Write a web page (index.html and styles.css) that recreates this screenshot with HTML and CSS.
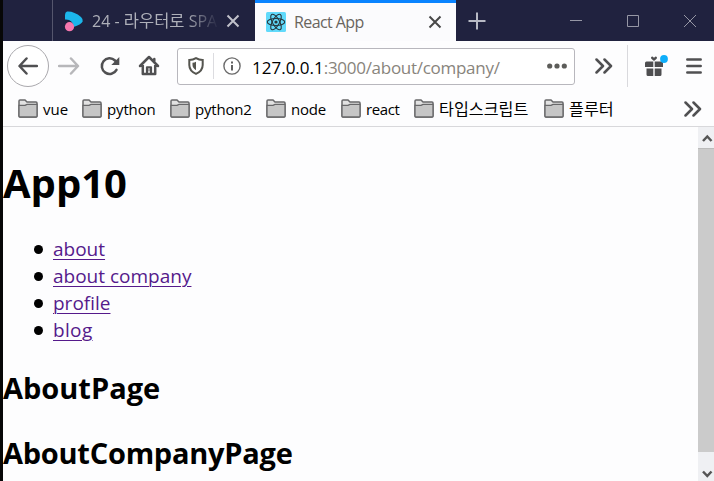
FILE: index.html
```html
<!DOCTYPE html>
<html lang="ko">
<head>
<meta charset="utf-8">
<title>React App</title>
<link rel="stylesheet" href="styles.css">
</head>
<body>
<div class="browser">
  <header class="tabs">
    <div class="tab">
      <svg class="favicon" width="20" height="21" viewBox="0 0 20 21"><path d="M3 0.5Q1 1 1 4V8.5Q9 8 9.5 16Q17 13.5 18.7 10.5Q19.5 8.5 17 6Q10 0 3 0.5Z" fill="#1cb6ea"/><circle cx="5.5" cy="15.7" r="4.6" fill="#f777ae"/></svg>
      <span class="tab-title faded">24 - <span class="tab-korean">라우터로</span> SPA</span>
      <svg class="tab-close" width="14" height="14" viewBox="0 0 14 14"><path d="M1.5 1.5L12.5 12.5M12.5 1.5L1.5 12.5"/></svg>
    </div>
    <div class="tab active">
      <svg class="favicon" width="20" height="20" viewBox="0 0 20 20"><rect width="20" height="20" rx="1.5" fill="#61dafb"/><g fill="none" stroke="#27363c" stroke-width="1.1"><ellipse cx="10" cy="10" rx="8.7" ry="3.5"/><ellipse cx="10" cy="10" rx="8.7" ry="3.5" transform="rotate(60 10 10)"/><ellipse cx="10" cy="10" rx="8.7" ry="3.5" transform="rotate(120 10 10)"/></g><circle cx="10" cy="10" r="1.6" fill="#27363c"/></svg>
      <span class="tab-title react">React App</span>
      <svg class="tab-close" width="14" height="14" viewBox="0 0 14 14"><path d="M1.5 1.5L12.5 12.5M12.5 1.5L1.5 12.5"/></svg>
    </div>
    <svg class="new-tab" width="18" height="18" viewBox="0 0 18 18"><path d="M9 0.5V17.5M0.5 9H17.5"/></svg>
    <div class="window-controls">
      <svg width="14" height="14" viewBox="0 0 14 14"><path d="M1 6.5H13"/></svg>
      <svg width="14" height="14" viewBox="0 0 14 14"><path d="M1.5 1.5H12.5V12.5H1.5Z"/></svg>
      <svg width="14" height="14" viewBox="0 0 14 14"><path d="M1 1L13 13M13 1L1 13"/></svg>
    </div>
  </header>
  <nav class="toolbar">
    <div class="back"><svg class="icon" width="20" height="20" viewBox="0 0 20 20"><path d="M19 10H2M8.5 2.5L1.5 10L8.5 17.5"/></svg></div>
    <svg class="icon forward" width="22" height="20" viewBox="0 0 22 20"><path d="M1 10H19M13 2.5L20 10L13 17.5"/></svg>
    <svg class="icon reload" width="20" height="20" viewBox="0 0 20 20"><path d="M16.5 13.8A7.8 7.8 0 1 1 15 4.5L17 6.5"/><path d="M19.3 1V9H11.3Z" class="solid"/></svg>
    <svg class="icon home" width="22" height="21" viewBox="0 0 22 21"><path d="M2 11L11 2L20 11M4.8 10V19H17.2V10M16.3 4V7"/><path d="M9 18.5V12.3H13V18.5" stroke-width="2.2"/><path d="M11 14.5V16" stroke-width="1"/></svg>
    <div class="address">
      <svg class="shield" width="16" height="18" viewBox="0 0 16 18"><path d="M8 1.2Q11 3 14.7 3V8Q14.7 14 8 16.8Q1.3 14 1.3 8V3Q5 3 8 1.2Z" fill="none" stroke="#55554f" stroke-width="2"/><path d="M8 4.7V13.2Q4.5 11 4.5 8V5.7Q6.5 5.5 8 4.7Z" fill="#55554f"/></svg>
      <span class="address-divider"></span>
      <svg class="info" width="18" height="18" viewBox="0 0 18 18"><circle cx="9" cy="9" r="8.1" fill="none" stroke="#6b6b6b" stroke-width="1.4"/><path d="M9 8V13.5M9 4.5V6.5" stroke="#606060" stroke-width="2"/></svg>
      <span class="url"><b>127.0.0.1</b>:3000/about/company/</span>
      <svg class="dots" width="20" height="6" viewBox="0 0 20 6"><circle cx="2.7" cy="3" r="2.6"/><circle cx="10" cy="3" r="2.6"/><circle cx="17.3" cy="3" r="2.6"/></svg>
    </div>
    <svg class="icon more" width="18" height="16" viewBox="0 0 18 16"><path d="M1.5 1.5L8 8L1.5 14.5M9.5 1.5L16 8L9.5 14.5"/></svg>
    <span class="tool-divider"></span>
    <svg class="gift" width="24" height="22" viewBox="0 0 24 22"><g fill="#4e4e50"><path d="M0 8Q0 6.5 1.5 6.5H8.3V12H0ZM9.7 6.5H16.5Q18 6.5 18 8V12H9.7ZM1.5 13.5H8.3V21H3Q1.5 21 1.5 19.5ZM9.7 13.5H16.5V19.5Q16.5 21 15 21H9.7Z"/><path d="M9 6L6.3 3.8Q5.5 1.5 7.5 1.5L9 2.8L10.5 1.5Q12.5 1.5 11.7 3.8Z"/></g><circle cx="19" cy="4" r="3.9" fill="#0eaefa"/></svg>
    <svg class="icon menu" width="16" height="16" viewBox="0 0 16 16"><path d="M1.3 1.5H14.7M1.3 8H14.7M1.3 14.5H14.7"/></svg>
  </nav>
  <div class="bookmarks">
    <svg class="symbols" width="0" height="0"><defs><g id="folder"><path d="M1 17V2Q1 1 2 1H7L9 3H18Q19 3 19 4V17Q19 18 18 18H2Q1 18 1 17Z" fill="#e2e2e2" stroke="#68686a" stroke-width="1.5"/><path d="M1 6.3H7L9 5.3H19V17Q19 18 18 18H2Q1 18 1 17Z" fill="#c6c6c6" stroke="#68686a" stroke-width="1.3"/></g></defs></svg>
    <div class="bookmark vue"><svg width="20" height="19"><use href="#folder"/></svg><span>vue</span></div>
    <div class="bookmark python"><svg width="20" height="19"><use href="#folder"/></svg><span>python</span></div>
    <div class="bookmark python2"><svg width="20" height="19"><use href="#folder"/></svg><span>python2</span></div>
    <div class="bookmark node"><svg width="20" height="19"><use href="#folder"/></svg><span>node</span></div>
    <div class="bookmark react-link"><svg width="20" height="19"><use href="#folder"/></svg><span>react</span></div>
    <div class="bookmark typescript"><svg width="20" height="19"><use href="#folder"/></svg><span>타입스크립트</span></div>
    <div class="bookmark flutter"><svg width="20" height="19"><use href="#folder"/></svg><span>플루터</span></div>
    <svg class="icon bookmarks-more" width="18" height="16" viewBox="0 0 18 16"><path d="M1.5 1.5L8 8L1.5 14.5M9.5 1.5L16 8L9.5 14.5"/></svg>
  </div>
  <div class="viewport">
    <main>
      <h1>App10</h1>
      <ul>
        <li><a class="l-about" href="#">about</a></li>
        <li><a class="l-company" href="#">about company</a></li>
        <li><a class="l-profile" href="#">profile</a></li>
        <li><a class="l-blog" href="#">blog</a></li>
      </ul>
      <h2>AboutPage</h2>
      <h2 class="company">AboutCompanyPage</h2>
    </main>
    <div class="scrollbar">
      <svg width="16" height="21" viewBox="0 0 16 21"><path d="M5 14L9.3 9.5L13.5 14"/></svg>
      <div class="thumb"></div>
      <svg width="16" height="29" viewBox="0 0 16 29"><path d="M5 19.5L9.3 24L13.5 19.5"/></svg>
    </div>
  </div>
</div>
</body>
</html>
```
FILE: styles.css
```css
* { box-sizing: border-box; }
body { margin: 0; font-family: "Open Sans", "Noto Sans CJK KR", sans-serif; color: #000; overflow: hidden; }
svg { display: block; flex: none; }
.browser { width: 714px; height: 481px; display: flex; flex-direction: column; border-left: 3px solid #070707; background: #fdfdfe; }
.tabs { height: 41px; flex: none; display: flex; align-items: center; background: #20223f; }
.tab { height: 41px; width: 203px; margin-left: 49px; border-left: 1px solid #55566d; padding: 1px 0 0 11px; display: flex; align-items: center; white-space: nowrap; }
.tab.active { width: 201px; margin-left: 0; border-left: 0; border-top: 3px solid #0a84ff; background: #fbfbfd; padding: 0 0 1px 11px; }
.tab-title { width: 127px; margin-left: 8px; overflow: hidden; font-size: 16px; line-height: 24px; color: #aeb0b9; }
.tab-korean { font-size: 16.5px; }
.faded { -webkit-mask-image: linear-gradient(90deg, #000 74%, transparent); mask-image: linear-gradient(90deg, #000 74%, transparent); }
.react { width: 128px; color: #69655e; letter-spacing: -0.6px; }
.tab-close { margin-left: 7px; fill: none; stroke: #c0c1ca; stroke-width: 2; }
.active .tab-close { margin-left: 6px; stroke: #484848; }
.new-tab { margin-left: 12px; fill: none; stroke: #b8bac5; stroke-width: 2; }
.window-controls { display: flex; gap: 43px; margin: 0 17px 0 auto; fill: none; stroke: #9697a5; stroke-width: 1; }
.toolbar { height: 49px; flex: none; display: flex; align-items: center; padding-left: 4px; }
.icon { fill: none; stroke: #505052; stroke-width: 2.5; stroke-linecap: round; stroke-linejoin: round; }
.solid { fill: #505052; stroke: none; }
.back { width: 42px; height: 42px; border: 1px solid #aaa9ad; border-radius: 50%; display: flex; align-items: center; justify-content: center; background: #fff; }
.forward { margin-left: 9px; stroke: #b7b7ba; }
.reload { margin-left: 20px; }
.home { margin-left: 18px; }
.address { margin-left: 17px; width: 398px; height: 37px; margin-top: 1px; border: 1px solid #b8b7bd; border-radius: 3px; background: #fff; display: flex; align-items: center; padding: 0 7px 0 10px; }
.address-divider { width: 1px; height: 26px; margin: 0 9px; background: #dcdce0; }
.url { width: 248px; margin: 2px 47px 0 11px; font-size: 17px; letter-spacing: -0.28px; white-space: nowrap; color: #88847c; }
.url b { font-weight: 400; letter-spacing: 0; color: #000; }
.dots { fill: #5c5c59; }
.more { margin-left: 20px; }
.tool-divider { width: 1px; height: 42px; margin: 0 17px 0 14px; background: #d9d9dd; }
.menu { margin-left: 17px; }
.bookmarks { height: 37px; flex: none; display: flex; align-items: center; gap: 15px; padding: 1px 12px 0 15px; border-bottom: 1px solid #d8d8db; }
.symbols { position: absolute; }
.bookmark { display: flex; align-items: center; gap: 5px; font-size: 15px; line-height: 20px; white-space: nowrap; }
.vue { width: 49px; }
.python { width: 73px; }
.python2 { width: 81px; letter-spacing: -0.2px; }
.node { width: 60px; }
.react-link { width: 58px; letter-spacing: -0.4px; }
.typescript { width: 115px; font-size: 16.2px; }
.flutter { width: 70px; font-size: 16.2px; }
.python { letter-spacing: -0.15px; }
.node { letter-spacing: -0.2px; }
.bookmarks-more { margin-left: auto; }
.viewport { flex: 1; min-height: 0; display: flex; }
main { flex: 1; font-size: 19px; }
h1 { margin: 29px 0 0; font-size: 40px; line-height: 54px; }
ul { margin: 26px 0 0; padding-left: 50px; line-height: 27px; list-style: none; }
li { display: flex; align-items: center; height: 27px; }
li::before { content: ""; width: 9px; height: 9px; margin: -1px 10px 0 -19px; border-radius: 50%; background: #000; }
a { color: #551a8b; text-decoration-thickness: 1px; text-underline-offset: 3px; }
.l-blog { letter-spacing: 0.35px; }
h2 { margin: 24px 0 0; font-size: 29px; line-height: 40px; white-space: nowrap; }
h2 + h2 { margin-top: 25px; letter-spacing: -0.25px; }
.scrollbar { width: 16px; display: flex; flex-direction: column; background: #eff0f3; fill: none; stroke: #555; stroke-width: 2.5; }
.thumb { flex: 1; background: #cbcbcb; border-top: 1px solid #bbb; }
```
